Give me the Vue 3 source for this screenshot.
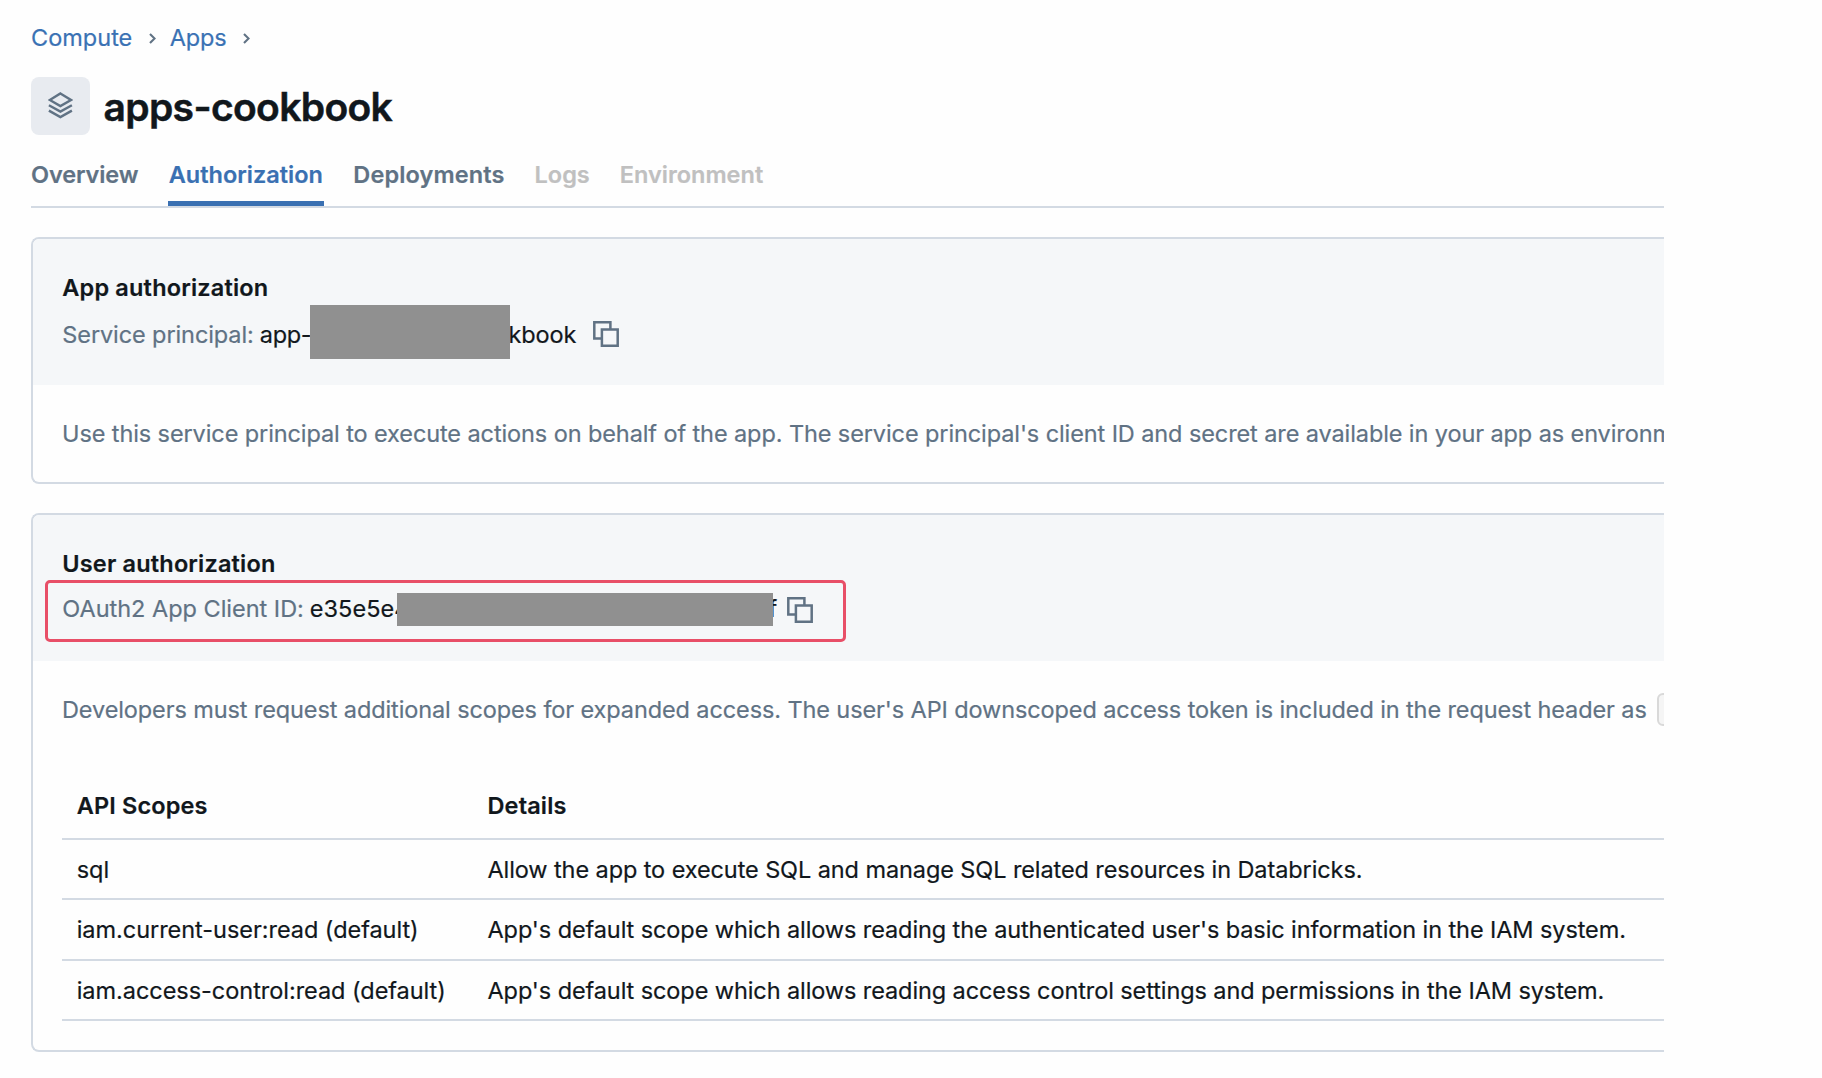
<script setup>
const tabs = [
  { name: 'Overview', cls: 'overview' },
  { name: 'Authorization', cls: 'active' },
  { name: 'Deployments', cls: 'deployments' },
  { name: 'Logs', cls: 'disabled' },
  { name: 'Environment', cls: 'disabled' },
]

const scopes = [
  { scope: 'sql', details: 'Allow the app to execute SQL and manage SQL related resources in Databricks.' },
  {
    scope: 'iam.current-user:read (default)',
    details: "App's default scope which allows reading the authenticated user's basic information in the IAM system.",
  },
  {
    scope: 'iam.access-control:read (default)',
    details: "App's default scope which allows reading access control settings and permissions in the IAM system.",
  },
]
</script>

<template>
  <main class="page">
    <nav class="crumbs">
      <a class="crumb">Compute</a>
      <svg class="chevron" viewBox="0 0 7 11"><path d="M1 .9 5.6 5.5 1 10.1" /></svg>
      <a class="crumb apps">Apps</a>
      <svg class="chevron" viewBox="0 0 7 11"><path d="M1 .9 5.6 5.5 1 10.1" /></svg>
    </nav>

    <header class="heading">
      <div class="app-icon">
        <svg viewBox="0 0 25 27">
          <path d="M12.4 1.5 23 8 12.4 14.1 1.8 8Z" />
          <path d="M.9 13.2 12.4 19.6 23.9 13.2" />
          <path d="M.9 18.6 12.4 25.1 23.9 18.6" />
        </svg>
      </div>
      <h1>apps-cookbook</h1>
    </header>

    <nav class="tabs">
      <a v-for="tab in tabs" :key="tab.name" class="tab" :class="tab.cls">{{ tab.name }}</a>
    </nav>

    <section class="card">
      <div class="card-head">
        <h2>App authorization</h2>
        <div class="field principal">
          <span class="label">Service principal:</span>
          <span class="value">app-</span>
          <span class="redacted"></span>
          <span class="value tail">kbook</span>
          <svg class="copy" viewBox="0 0 26 26">
            <path d="M8 17.4H1.3V1.3h16.1V8" />
            <path d="M8.9 8.6h15.8v16.1H8.9Z" />
          </svg>
        </div>
      </div>
      <div class="card-body">
        <p>Use this service principal to execute actions on behalf of the app. The service principal's client ID and secret are available in your app as environm</p>
      </div>
    </section>

    <section class="card">
      <div class="card-head">
        <h2>User authorization</h2>
        <div class="field client">
          <span class="label">OAuth2 App Client ID:</span>
          <span class="value">e35e5e4</span>
          <span class="redacted"></span>
          <span class="value tail">f</span>
          <svg class="copy" viewBox="0 0 26 26">
            <path d="M8 17.4H1.3V1.3h16.1V8" />
            <path d="M8.9 8.6h15.8v16.1H8.9Z" />
          </svg>
          <span class="highlight"></span>
        </div>
      </div>
      <div class="card-body scopes">
        <p class="request">Developers must request additional scopes for expanded access. The user's API downscoped access token is included in the request header as<code></code></p>
        <div class="table">
          <div class="row head"><span>API Scopes</span><span>Details</span></div>
          <div v-for="item in scopes" :key="item.scope" class="row">
            <span>{{ item.scope }}</span><span>{{ item.details }}</span>
          </div>
        </div>
      </div>
    </section>
  </main>
</template>

<style>
body {
  background: #fefefe;
}
</style>

<style scoped>
.page {
  box-sizing: border-box;
  width: 1664px;
  height: 1078px;
  padding: 20px 0 0 31px;
  overflow: hidden;
  font: 400 23.5px/36px Inter, sans-serif;
  letter-spacing: -0.1px;
  color: #11171c;
  white-space: nowrap;
  -webkit-text-stroke-width: 0.2px;
}
h1,
h2,
p {
  margin: 0;
}
svg {
  display: block;
  flex: none;
  fill: none;
  stroke: #607284;
}

.crumbs {
  display: flex;
  align-items: center;
  height: 36px;
}
.crumb {
  color: #3a72b4;
  letter-spacing: 0;
}
.crumb.apps {
  margin-left: 14px;
  letter-spacing: -0.2px;
}
.chevron {
  width: 7px;
  height: 11px;
  margin: 0 0 0 16.5px;
  stroke-width: 2.1;
}

.heading {
  display: flex;
  gap: 14px;
  margin-top: 21px;
  height: 58px;
}
.app-icon {
  display: flex;
  align-items: center;
  justify-content: center;
  width: 58.5px;
  height: 58px;
  border-radius: 8px;
  background: #e8ebf0;
}
.app-icon svg {
  width: 25px;
  height: 27px;
  margin-bottom: 1px;
  stroke-width: 2.4;
}
h1 {
  font-size: 39px;
  font-weight: 600;
  line-height: 60px;
  letter-spacing: -0.65px;
  -webkit-text-stroke-width: 0.5px;
}

.tabs {
  display: flex;
  gap: 30px;
  height: 50px;
  margin-top: 21px;
  border-bottom: 2px solid #d3dae3;
}
.tab {
  box-sizing: border-box;
  height: 50px;
  padding-top: 1px;
  font-weight: 600;
  color: #607284;
  letter-spacing: 0;
}
.tab.overview {
  width: 107px;
  letter-spacing: -0.12px;
}
.tab.active {
  width: 156px;
  border-bottom: 5px solid #3a70b2;
  color: #3a70b2;
  text-indent: 0.7px;
}
.tab.deployments {
  margin-left: -0.7px;
  letter-spacing: 0.13px;
}
.tab.disabled {
  color: #c0c0c0;
}

.card {
  box-sizing: border-box;
  margin-top: 29px;
  border: 2px solid #d3dae3;
  border-right: 0;
  border-radius: 8px 0 0 8px;
  overflow: hidden;
}
.card-head {
  box-sizing: border-box;
  height: 146px;
  padding: 31px 0 0 29.3px;
  background: #f5f7f9;
}
h2 {
  font-size: 23.5px;
  font-weight: 600;
  line-height: 36px;
  letter-spacing: 0.18px;
}
.field {
  position: relative;
  display: flex;
  align-items: center;
  height: 36px;
}
.label,
.value {
  padding-top: 2px;
}
.label {
  color: #607284;
}
.redacted {
  position: relative;
  flex: none;
  background: #909090;
}
.copy {
  width: 26px;
  height: 26px;
  stroke-width: 2.5;
}
.principal {
  margin-top: 10px;
}
.principal .label {
  width: 197.5px;
}
.principal .value:not(.tail) {
  width: 50.7px;
  letter-spacing: -0.3px;
}
.principal .redacted {
  width: 200px;
  height: 54px;
  margin-bottom: 4px;
}
.principal .tail {
  width: 84.5px;
  margin-left: -2px;
}
.client {
  margin-top: 8px;
}
.client .label {
  width: 247.5px;
  letter-spacing: -0.015px;
}
.client .value:not(.tail) {
  width: 87.2px;
  letter-spacing: 0.05px;
}
.client .redacted {
  width: 376px;
  height: 32.5px;
  margin-bottom: -3px;
}
.client .tail {
  width: 18.5px;
  margin-left: -4.5px;
}
.client .copy {
  margin-bottom: -4px;
}
.highlight {
  position: absolute;
  box-sizing: border-box;
  left: -17px;
  top: -10px;
  width: 801px;
  height: 62px;
  border: 3.5px solid #e84f68;
  border-radius: 5px;
}

.card-body {
  box-sizing: border-box;
  height: 97px;
  padding: 31px 0 0 29px;
}
.card-body p {
  color: #607284;
}
.card-body.scopes {
  height: 389px;
}
.request {
  display: flex;
  align-items: center;
  height: 36px;
  letter-spacing: -0.108px;
}
.request code {
  box-sizing: border-box;
  flex: none;
  width: 300px;
  height: 33px;
  margin: 0 0 1px 10.5px;
  border: 2px solid #d9d9d9;
  border-radius: 6px;
  background: #f5f5f5;
}

.table {
  margin-top: 45px;
}
.row {
  box-sizing: border-box;
  display: grid;
  grid-template-columns: 410.8px 1fr;
  align-items: center;
  height: 60.33px;
  border-bottom: 2px solid #d3dae3;
}
.row span {
  padding: 2px 0 0 14.7px;
  letter-spacing: -0.094px;
}
.row span:first-child {
  letter-spacing: -0.04px;
}
.row.head {
  height: 67px;
  font-weight: 600;
}
.row.head span {
  padding-top: 1px;
  letter-spacing: 0.15px;
}
</style>
